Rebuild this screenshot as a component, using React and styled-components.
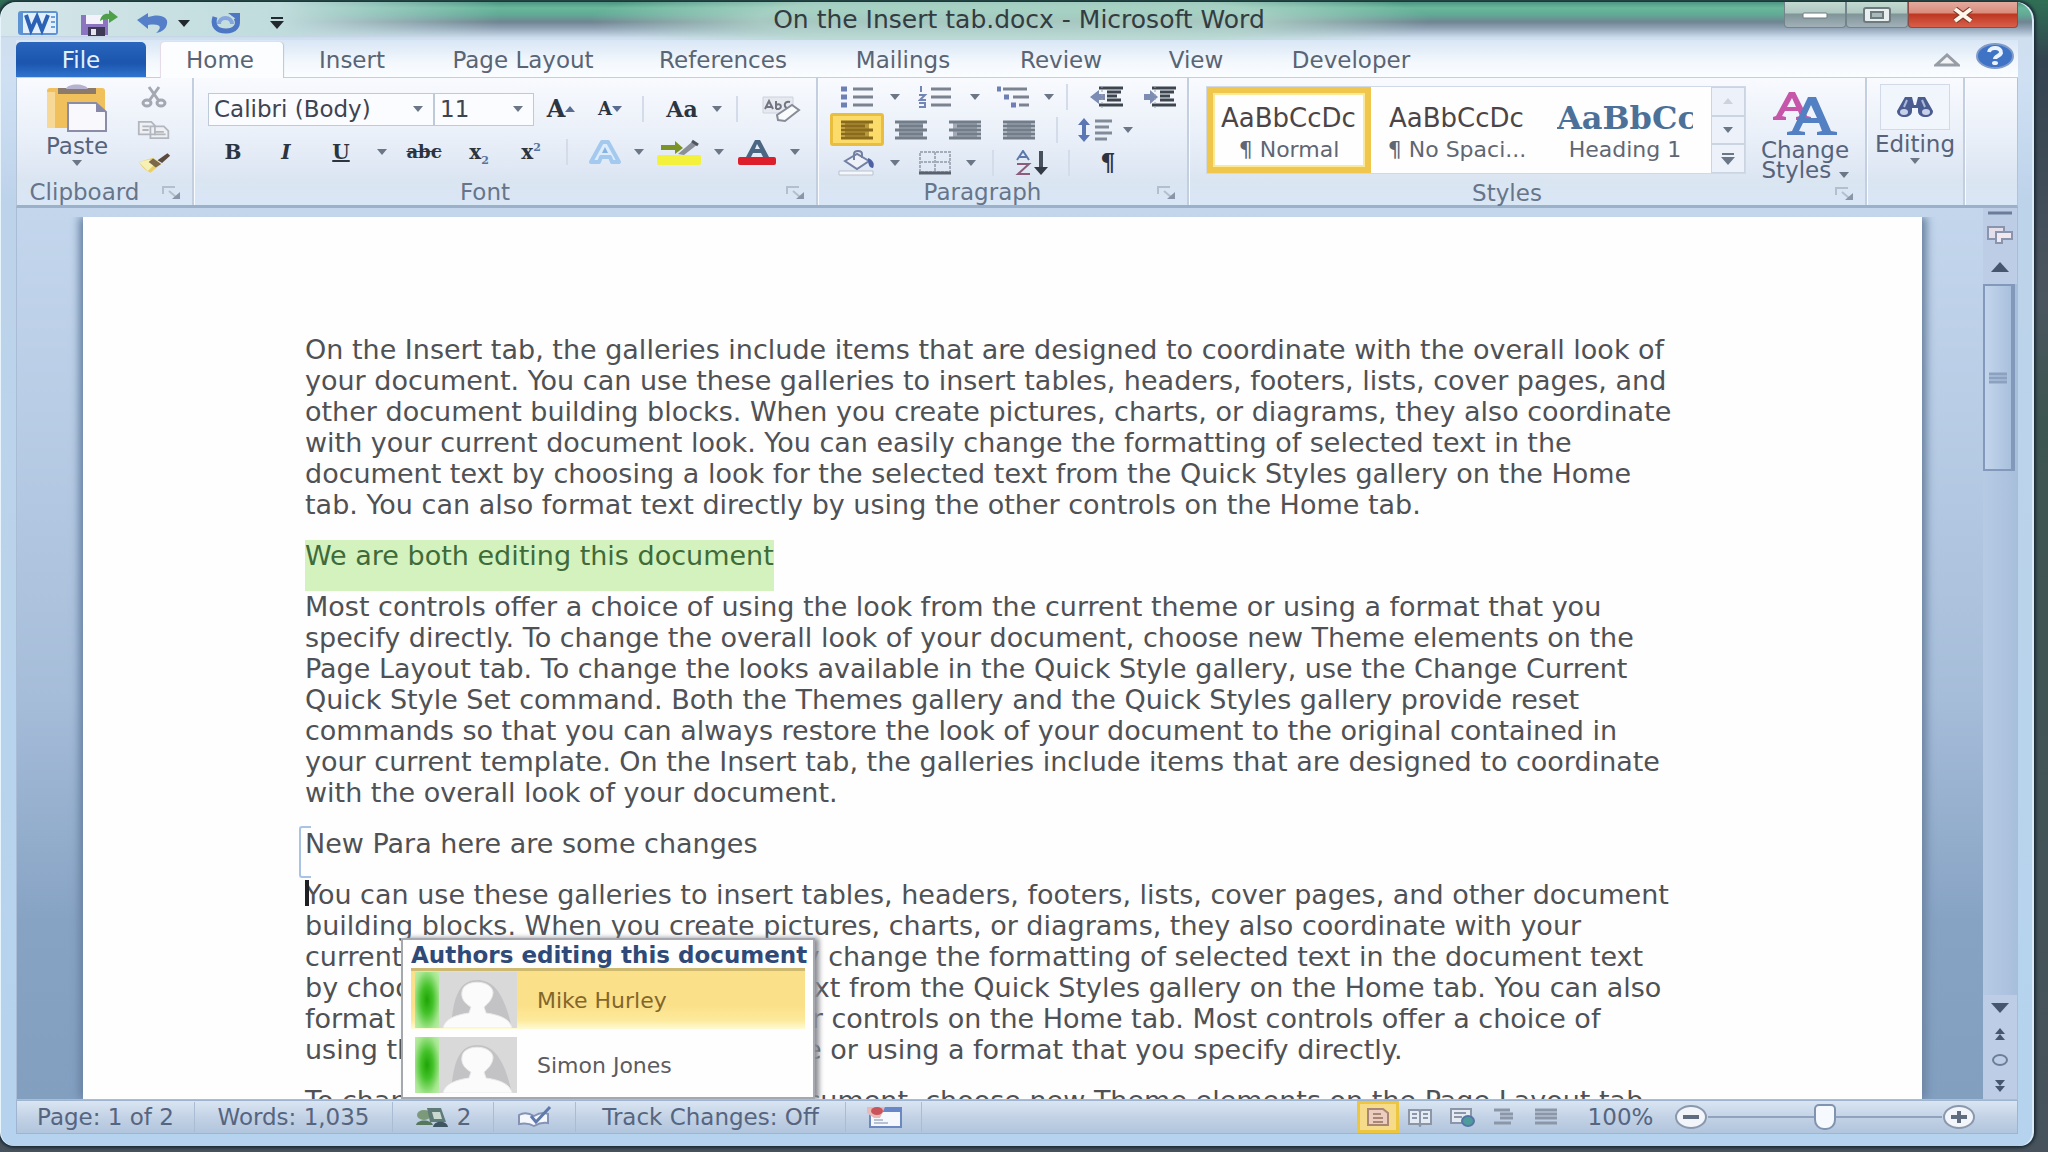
import React, { useState } from 'react'
import styled, { createGlobalStyle } from 'styled-components'

const GlobalStyle = createGlobalStyle`
  * { box-sizing: border-box; }
  body {
    margin: 0;
    background: linear-gradient(180deg, #2f6f55 0, #33434f 60px, #4b5560 300px, #3d5550 420px, #47525c 100%);
    font-family: "DejaVu Sans", sans-serif;
    font-size: 23px;
    color: #4a5361;
    overflow: hidden;
  }
  button, select, input { font: inherit; color: inherit; margin: 0; padding: 0; }
  button { border: 0; background: none; cursor: pointer; }
  p { margin: 0; }
`

/* ---------- window ---------- */

const Window = styled.div`
  height: calc(100vh - 8px);
  margin: 2px 14px 6px 0;
  padding: 0 16px 12px;
  display: flex;
  flex-direction: column;
  border-radius: 16px 18px 14px 14px;
  background:
    radial-gradient(ellipse 420px 46px at 1010px 18px, #b5d8cdcc 60%, #b5d8cd00 100%) no-repeat,
    linear-gradient(90deg, #d5e6ea 0, #c0dcdc 280px, #9fd0bf00 500px) 0 0 / 100% 34px no-repeat,
    linear-gradient(180deg, #4f9583 0, #68b79b 6px, #62a896 13px, #6f8590 20px, #8fa2b5 26px, #cfdfef 36px, #cfe0f3 76px, #bdd3ea 200px, #b5d3ee 100%);
  box-shadow: 0 0 3px 2px #1d2c38, inset 1px 0 0 #e8f4fb, inset -2px 0 0 #d8ebf6;
`
const TitleBar = styled.header`
  height: 38px;
  flex: none;
  display: flex;
  justify-content: space-between;
  align-items: center;
  position: relative;
`
const QuickAccess = styled.div`
  display: flex;
  align-items: center;
  padding-top: 4px;
`
const QuickButton = styled.button`
  width: ${({ $w }) => $w}px;
  height: 30px;
  display: flex;
  align-items: center;
  justify-content: center;
`
const Title = styled.h1`
  position: absolute;
  left: 0;
  right: 0;
  top: 4px;
  margin: 0;
  padding-left: 4px;
  text-align: center;
  font-size: 25px;
  line-height: 28px;
  font-weight: 400;
  color: #333c40;
  pointer-events: none;
  white-space: pre;
`
const WindowButtons = styled.div`
  display: flex;
  align-self: flex-start;
`
const WindowButton = styled.button`
  width: ${({ $close }) => ($close ? 110 : 62)}px;
  height: 26px;
  display: flex;
  align-items: center;
  justify-content: center;
  border: 1px solid ${({ $close }) => ($close ? '#8d4a43' : '#73858a')};
  border-top: 0;
  border-radius: 0 0 4px 4px;
  background: ${({ $close }) => $close
    ? 'linear-gradient(180deg, #e3aa9e 0, #d98b7b 11px, #bd3620 12px, #d9604a 100%)'
    : 'linear-gradient(180deg, #c3d9d2 0, #b0c8c2 11px, #7f9598 12px, #a3b0b8 100%)'};
`

/* ---------- tabs ---------- */

const TabBar = styled.nav`
  height: 38px;
  flex: none;
  display: flex;
  align-items: stretch;
  background: linear-gradient(180deg, #d8e6f5 0, #f3f8fd 60%, #fbfdff 100%);
  border-bottom: 1px solid #c2cfdd;
`
const FileTab = styled.button`
  width: 130px;
  margin: 2px 15px 0 0;
  border-radius: 5px 5px 0 0;
  color: #e4efff;
  background: linear-gradient(180deg, #2a66bd 0, #1b55ad 60%, #2f74cf 100%);
`
const Tab = styled.button`
  width: ${({ $w }) => $w}px;
  margin: 2px 0 -1px;
  padding-right: 4px;
  color: #596474;
  border-radius: 4px 4px 0 0;
  background: ${({ $active }) => ($active ? '#fcfdff' : 'transparent')};
  box-shadow: ${({ $active }) => ($active ? '1px 0 1px #b9c6d6, -1px 0 1px #e5d9e6' : 'none')};
`
const TabTools = styled.div`
  margin-left: auto;
  display: flex;
  align-items: center;
  gap: 16px;
  padding-right: 4px;
`

/* ---------- ribbon ---------- */

const Ribbon = styled.section`
  height: 130px;
  flex: none;
  display: flex;
  border: 1px solid #b3c3d6;
  border-top: 0;
  border-bottom: 3px solid #9bb1c9;
  background: linear-gradient(180deg, #f8fafe 0, #eaf0f9 45%, #dbe5f2 80%, #d9e6f5 100%);
`
const Group = styled.div`
  width: ${({ $w }) => $w}px;
  flex: none;
  display: flex;
  flex-direction: column;
  border-right: 2px solid #c3cfdf;
  box-shadow: 1px 0 0 #f8fbff;
`
const GroupBody = styled.div`
  flex: 1;
  display: flex;
  flex-direction: ${({ $column }) => ($column ? 'column' : 'row')};
  padding: ${({ $pad }) => $pad || '2px 0 0'};
`
const GroupFoot = styled.footer`
  height: 26px;
  display: flex;
  align-items: center;
  padding-right: 10px;
  color: #66758a;
`
const GroupName = styled.span`
  flex: 1;
  padding-right: 10px;
  text-align: center;
`
const Row = styled.div`
  height: ${({ $h }) => $h || 33}px;
  display: flex;
  align-items: center;
`
const Tool = styled.button`
  width: ${({ $w }) => $w}px;
  height: 33px;
  flex: none;
  display: flex;
  align-items: center;
  justify-content: center;
  border-radius: 3px;
  border: ${({ $on }) => ($on ? '3px solid #e9be3f' : '0')};
  background: ${({ $on }) => ($on ? '#fbdc6a' : 'none')};
`
const Glyph = styled.span`
  font-family: "DejaVu Serif", serif;
  font-weight: 700;
  font-size: ${({ $size }) => $size || 20}px;
  line-height: 26px;
  color: #2c3440;
  font-style: ${({ $italic }) => ($italic ? 'italic' : 'normal')};
  text-decoration: ${({ $line }) => $line || 'none'};
  sup, sub { font-size: 11px; line-height: 0; color: #5674a0; }
`
const Rule = styled.i`
  width: 2px;
  height: 26px;
  flex: none;
  margin: 0 ${({ $m }) => $m || 0}px;
  background: #d3dce8;
`
const Combo = styled.label`
  width: ${({ $w }) => $w}px;
  height: 33px;
  display: flex;
  align-items: center;
  border: 1px solid #bfcad8;
  background: #fbfcff;
  padding-right: 10px;
  select {
    flex: 1;
    min-width: 0;
    height: 30px;
    padding-left: 5px;
    border: 0;
    outline: 0;
    appearance: none;
    background: none;
    font-size: 23px;
    color: #3d4450;
  }
`
const BigTool = styled.button`
  width: ${({ $w }) => $w}px;
  display: flex;
  flex-direction: column;
  align-items: center;
  gap: 4px;
  padding-top: 4px;
  line-height: 20px;
  color: #56637a;
`
const SmallStack = styled.div`
  display: flex;
  flex-direction: column;
`
const Gallery = styled.div`
  display: flex;
  flex: none;
  width: 540px;
  height: 88px;
  border: 1px solid #d0dae6;
  background: #fefeff;
`
const StyleCard = styled.button`
  width: ${({ $w }) => $w}px;
  overflow: hidden;
  display: flex;
  flex-direction: column;
  justify-content: center;
  align-items: center;
  gap: 4px;
  padding-top: 4px;
  white-space: nowrap;
  border: ${({ $on }) => ($on ? '6px solid #f0c64c' : '0')};
  box-shadow: ${({ $on }) => ($on ? 'inset 0 0 0 2px #fbe99a' : 'none')};
`
const Sample = styled.span`
  width: 136px;
  overflow: hidden;
  text-align: left;
  font-family: ${({ $heading }) => ($heading ? '"DejaVu Serif", serif' : '"DejaVu Sans", sans-serif')};
  font-weight: ${({ $heading }) => ($heading ? 700 : 400)};
  font-size: ${({ $heading }) => ($heading ? 32 : 26)}px;
  line-height: 32px;
  color: ${({ $heading }) => ($heading ? '#4c7199' : '#4b4547')};
`
const SampleName = styled.span`
  font-size: 22px;
  line-height: 24px;
  color: #606773;
`
const GalleryScroll = styled.div`
  width: 34px;
  margin-left: auto;
  display: flex;
  flex-direction: column;
  background: #edf2fa;
  button {
    flex: 1;
    border: 1px solid #cbd5e2;
    display: flex;
    align-items: center;
    justify-content: center;
  }
`
const FindFrame = styled.span`
  width: 70px;
  height: 46px;
  display: flex;
  align-items: center;
  justify-content: center;
  border: 1px solid #d2dae8;
  background: #f1f5fc;
`

/* ---------- document ---------- */

const Workspace = styled.main`
  flex: 1;
  min-height: 0;
  display: flex;
  padding-top: 9px;
  border: 1px solid #a9bdd6;
  border-top: 0;
  background: linear-gradient(180deg, #c3d6ec 0, #b9cde6 22%, #a6bdd9 55%, #87a3c4 80%, #829fc0 100%);
`
const Page = styled.article`
  flex: 1;
  margin: 0 61px 0 66px;
  padding: 117px 200px 0 222px;
  position: relative;
  background: #fefefe;
  box-shadow: 5px 0 8px #6f87a5, -4px 0 8px #6b84a6;
  clip-path: inset(0 -16px 0 -16px);
`
const Text = styled.div`
  height: 100%;
  overflow: hidden;
  display: flex;
  flex-direction: column;
  align-items: flex-start;
  gap: 20px;
  margin: 0 -12px;
  padding: 0 12px;
  font-size: 27px;
  line-height: 31px;
  color: #4f5155;
`
const Para = styled.p`
  flex: none;
  white-space: pre;
  position: relative;
`
const Marked = styled(Para)`
  height: 51px;
  margin-bottom: -20px;
  background: #d3f2bd;
  color: #3f6b3a;
`
const Locked = styled(Para)`
  &::before {
    content: '';
    position: absolute;
    left: -6px;
    top: -2px;
    width: 10px;
    height: 48px;
    border: 2px solid #a9c3e6;
    border-right: 0;
    border-radius: 3px 0 0 3px;
  }
`
const Caret = styled.i`
  position: absolute;
  left: 0;
  top: 1px;
  width: 4px;
  height: 26px;
  background: #1f2024;
`

const Authors = styled.aside`
  position: absolute;
  left: 318px;
  bottom: 0;
  width: 414px;
  height: 161px;
  padding: 2px 8px;
  border: 2px solid #a5a8ae;
  background: #fefefe;
  box-shadow: 4px 0 5px #8b8d92;
`
const AuthorsTitle = styled.h2`
  margin: 0;
  font-size: 23px;
  line-height: 26px;
  color: #2f4a78;
  white-space: nowrap;
`
const Author = styled.button`
  width: 100%;
  height: 61px;
  margin-bottom: 4px;
  padding: 2px 4px;
  display: flex;
  align-items: center;
  gap: 20px;
  text-align: left;
  font-size: 22px;
  color: ${({ $on }) => ($on ? '#82672c' : '#5b5b60')};
  border-top: 3px solid ${({ $on }) => ($on ? '#cdb96f' : 'transparent')};
  background: ${({ $on }) => ($on ? 'linear-gradient(180deg, #fbe08a 0, #fbe08a 60%, #fdea9c 85%, #fefbd5 100%)' : 'none')};
`
const Presence = styled.span`
  width: 102px;
  height: 56px;
  display: flex;
  flex: none;
`
const Glow = styled.i`
  width: 24px;
  background: radial-gradient(ellipse at center, #1fa406 0, #44c22a 35%, #a5e68f 75%, #bfeeaa 100%);
`

/* ---------- scroll bar ---------- */

const ScrollBar = styled.div`
  width: 34px;
  margin-top: -9px;
  display: flex;
  flex-direction: column;
  background: #b3c7e1;
`
const ScrollButton = styled.button`
  height: ${({ $h }) => $h}px;
  flex: none;
  display: flex;
  align-items: center;
  justify-content: center;
  background: #bccde5;
`
const ScrollTrack = styled.div`
  flex: 1;
  background: linear-gradient(90deg, #b6cae4, #a8bfdc);
`
const Thumb = styled.div`
  width: 32px;
  height: 187px;
  display: flex;
  align-items: center;
  justify-content: center;
  border: 2px solid #8299bb;
  border-right-width: 4px;
  background: linear-gradient(90deg, #c3d5ec, #a9c0dd);
`

/* ---------- status bar ---------- */

const Status = styled.footer`
  height: 34px;
  flex: none;
  display: flex;
  align-items: center;
  border: 1px solid #9fb4cf;
  background: linear-gradient(180deg, #d9e5f2 0, #c3d2e5 50%, #b1c5dd 100%);
  color: #56657f;
`
const StatusItem = styled.button`
  width: ${({ $w }) => $w}px;
  height: 30px;
  flex: none;
  display: flex;
  align-items: center;
  justify-content: center;
  gap: 8px;
  white-space: nowrap;
  border-right: 1px solid #a9bcd4;
`
const StatusRight = styled.div`
  margin-left: auto;
  display: flex;
  align-items: center;
  padding-right: 41px;
`
const View = styled.button`
  width: 42px;
  height: 32px;
  display: flex;
  align-items: center;
  justify-content: center;
  border: ${({ $on }) => ($on ? '3px solid #ecc63e' : '0')};
  background: ${({ $on }) => ($on ? '#f6dc8a' : 'none')};
`
const ZoomValue = styled.button`
  width: 107px;
  height: 30px;
`
const ZoomButton = styled.button`
  width: 34px;
  height: 30px;
  display: flex;
`
const ZoomRange = styled.input`
  width: 234px;
  height: 30px;
  appearance: none;
  background: linear-gradient(#8fa3bf, #8fa3bf) 0 14px / 100% 2px no-repeat;
  &::-webkit-slider-thumb {
    appearance: none;
    width: 22px;
    height: 26px;
    border: 2px solid #8093b0;
    border-radius: 5px 5px 10px 10px;
    background: #f6f9fe;
  }
`

/* ---------- icons ---------- */

const Arrow = ({ color = '#6b7686', w = 10, up }) => (
  <svg width={w} height={w / 2 + 1} viewBox="0 0 10 6" preserveAspectRatio="none">
    <path d={up ? 'M0 6 5 0l5 6z' : 'M0 0h10L5 6z'} fill={color} />
  </svg>
)

const Launcher = () => (
  <button aria-label="More options">
    <svg width="20" height="14" viewBox="0 0 20 14" fill="none" stroke="#b4bfcd" strokeWidth="2">
      <path d="M1 8V1h12M7 5l7 6" />
      <path d="M18 6v7h-8z" fill="#8a96a8" stroke="none" />
    </svg>
  </button>
)

const WordLogo = () => (
  <svg width="42" height="26" viewBox="0 0 42 26">
    <rect x="1" y="1" width="40" height="24" rx="3" fill="#5d93d3" />
    <rect x="6" y="3" width="33" height="20" fill="#e3f0fc" />
    <path d="M34 7h4M34 12h4M34 17h4" stroke="#6ea0da" strokeWidth="2" />
    <path d="M9 5l5 15 6-13 5 13 6-15" fill="none" stroke="#2c62b5" strokeWidth="4" />
  </svg>
)

const SaveIcon = () => (
  <svg width="42" height="28" viewBox="0 0 42 28">
    <path d="M4 6h27v20H4z" fill="#8d74c0" />
    <path d="M9 6h17v9H9z" fill="#f4f2fb" />
    <path d="M11 18h17v9H11z" fill="#3e3a55" />
    <path d="M14 20h5v6h-5z" fill="#e6e4ef" />
    <path d="M23 12c1-6 5-8 9-7V1l9 7-9 6v-4c-3 0-6 0-9 2z" fill="#4f9f4a" />
  </svg>
)

const UndoIcon = () => (
  <svg width="34" height="22" viewBox="0 0 34 22">
    <path d="M1 8 12 1v4c12-4 21 0 19 7-1 5-5 8-11 9 6-5 6-10-8-8v4z" fill="#5580c9" />
  </svg>
)

const RedoIcon = () => (
  <svg width="30" height="22" viewBox="0 0 30 22" fill="none">
    <path d="M4 5c-3 9 2 14 11 14s14-6 10-13" stroke="#4d76c4" strokeWidth="5" />
    <path d="M8 12c0-8 13-8 13 0" stroke="#86a5dc" strokeWidth="4" />
    <path d="M17 1h12v9z" fill="#4d76c4" />
  </svg>
)

const MoreIcon = ({ color = '#22292e' }) => (
  <svg width="14" height="12" viewBox="0 0 14 12" fill={color}><path d="M1 0h12v2H1zM0 4h14l-7 8z" /></svg>
)

const MinIcon = () => (
  <svg width="26" height="8" viewBox="0 0 26 8"><rect x="1" y="2" width="24" height="5" rx="1" fill="#fff" stroke="#6d7a80" /></svg>
)

const MaxIcon = () => (
  <svg width="32" height="18" viewBox="0 0 32 18">
    <rect x="3" y="2" width="26" height="14" rx="2" fill="#e9efef" stroke="#6d7a80" strokeWidth="2" />
    <rect x="10" y="6" width="12" height="6" fill="#a9b8b8" stroke="#6d7a80" strokeWidth="2" />
  </svg>
)

const CloseIcon = () => (
  <svg width="22" height="16" viewBox="0 0 22 16">
    <path d="M3 2l16 12M19 2 3 14" stroke="#7d3a30" strokeWidth="6" />
    <path d="M3 2l16 12M19 2 3 14" stroke="#fff8ea" strokeWidth="4" />
  </svg>
)

const CollapseIcon = () => (
  <svg width="26" height="14" viewBox="0 0 26 14"><path d="M2 12 13 2l11 10z" fill="#f2f4f6" stroke="#979da6" strokeWidth="3" /></svg>
)

const HelpIcon = () => (
  <svg width="38" height="26" viewBox="0 0 38 26">
    <ellipse cx="19" cy="13" rx="18" ry="12" fill="#3f73c6" stroke="#7f9bc9" strokeWidth="2" />
    <path d="M13 9c1-6 13-5 12 1-1 3-6 3-6 6" fill="none" stroke="#eaf3ff" strokeWidth="4" />
    <ellipse cx="19" cy="20" rx="3" ry="2" fill="#eaf3ff" />
  </svg>
)

const PasteIcon = () => (
  <svg width="66" height="48" viewBox="0 0 66 48">
    <rect x="3" y="4" width="58" height="40" rx="3" fill="#efc05c" />
    <path d="M3 8h8v36H3z" fill="#f7d896" />
    <path d="M14 4h38v6H14z" fill="#8c7b6b" />
    <path d="M22 5c1-6 20-6 22 0z" fill="#b5b1cf" />
    <path d="M24 19h28l10 9v19H24z" fill="#f8f8fd" stroke="#8b8ca6" strokeWidth="2" />
    <path d="M52 19v9h10z" fill="#8889a8" />
  </svg>
)

const CutIcon = () => (
  <svg width="26" height="22" viewBox="0 0 26 22" fill="none" stroke="#a3a8b2" strokeWidth="3">
    <path d="M8 1l10 14M18 1 8 15" />
    <ellipse cx="6" cy="17" rx="4" ry="3" />
    <ellipse cx="20" cy="17" rx="4" ry="3" />
  </svg>
)

const CopyIcon = () => (
  <svg width="38" height="22" viewBox="0 0 38 22" fill="#eef0f4" stroke="#b2b6bf" strokeWidth="2">
    <path d="M2 2h14l4 4v10H2zM15 7h15l5 5v8H15z" />
    <path d="M19 13h11M19 16h13M6 7h8M6 11h7" />
  </svg>
)

const BrushIcon = () => (
  <svg width="38" height="24" viewBox="0 0 38 24">
    <path d="M2 11 18 6l9 7-12 10c-5-2-9-6-13-12z" fill="#e9cf6a" />
    <path d="M2 11 14 8l6 5-8 8z" fill="#f7f0b4" />
    <path d="M18 7l9 6-6 4-8-6z" fill="#7b6749" />
    <path d="M23 9 34 1l3 3-9 8z" fill="#5b4a3e" />
  </svg>
)

const ClearIcon = () => (
  <svg width="40" height="30" viewBox="0 0 40 30">
    <path d="M2 3h30v16H2z" fill="#e7e9f0" stroke="#cdd2dc" />
    <path d="M4 15l4-8 4 8M5 13h6M15 7v8M15 11c6-3 7 5 0 4M29 8c-7-2-7 8 0 6" fill="none" stroke="#70757f" strokeWidth="2" />
    <path d="M16 21 31 11l7 5-14 11-7-1z" fill="#fafbfd" stroke="#868c98" strokeWidth="2" />
  </svg>
)

const EffectA = () => (
  <svg width="36" height="26" viewBox="0 0 36 26">
    <path d="M4 23 15 3h6l11 20h-7l-2-5h-9l-2 5z" fill="#dcecfb" stroke="#a3c9ef" strokeWidth="4" strokeLinejoin="round" />
    <path d="M15 14h6l-3-6z" fill="#86b3e3" />
  </svg>
)

const HighlightIcon = () => (
  <svg width="46" height="30" viewBox="0 0 46 30">
    <rect x="1" y="18" width="44" height="10" rx="2" fill="#f4f13c" />
    <path d="M5 8h14V4l8 7-8 6v-4H5z" fill="#7c9427" />
    <path d="M22 17l15-13 5 3-14 11z" fill="#8a8f98" />
    <path d="M36 4l6 4" stroke="#4f5560" strokeWidth="3" />
  </svg>
)

const ColorIcon = () => (
  <svg width="40" height="28" viewBox="0 0 40 28">
    <path d="M9 19 18 2h5l9 17h-6l-2-4h-8l-2 4zm9-8h5l-3-5z" fill="#4c6784" />
    <rect x="1" y="19" width="38" height="8" rx="2" fill="#dc1f2b" />
  </svg>
)

const ListIcon = ({ kind }) => (
  <svg width="34" height="22" viewBox="0 0 34 22" stroke="#7b8391" strokeWidth="3">
    {kind === 'multi'
      ? <path d="M6 3h24M16 11h16M22 19h10" />
      : <path d="M13 3h20M13 11h20M13 19h20" />}
    {kind === 'bullet' && <path d="M1 3h6M1 11h6M1 19h6" stroke="#6c80b5" strokeWidth="5" />}
    {kind === 'number' && <path d="M3 0v6M1 9h6l-5 5h6M1 17h6v4H1" fill="none" stroke="#7385b4" strokeWidth="2" />}
    {kind === 'multi' && <path d="M0 3h4M7 11h5M14 19h5" stroke="#6c80b5" strokeWidth="5" />}
  </svg>
)

const AlignIcon = ({ kind, color = '#737c89' }) => {
  const d = {
    left: 'M1 2h32M1 6h24M1 10h32M1 14h24M1 18h32',
    center: 'M1 2h32M5 6h24M1 10h32M5 14h24M1 18h32',
    right: 'M1 2h32M9 6h24M1 10h32M9 14h24M1 18h32',
    justify: 'M1 2h32M1 6h32M1 10h32M1 14h32M1 18h32',
  }[kind]
  return (
    <svg width="34" height="20" viewBox="0 0 34 20">
      <path d="M5 2h24v16H5z" fill={color} opacity="0.6" />
      <path d={d} stroke={color} strokeWidth="3" />
    </svg>
  )
}

const IndentIcon = ({ more }) => (
  <svg width="38" height="22" viewBox="0 0 38 22">
    <path d="M12 2h24M20 6h14M20 10h10M20 14h14M12 19h24" stroke="#3d454f" strokeWidth="3" />
    <path d={more ? 'M4 8h6V4l8 7-8 7v-4H4z' : 'M18 8h-6V4l-9 7 9 7v-4h6z'} fill="#7c8cb2" />
    <path d="M15 0v22" stroke="#9aa4b5" strokeWidth="1" strokeDasharray="2 2" />
  </svg>
)

const SpacingIcon = () => (
  <svg width="36" height="26" viewBox="0 0 36 26">
    <path d="M1 8l6-7 6 7zM1 18l6 7 6-7zM5 8h4v10H5z" fill="#5b76b4" />
    <path d="M18 4h17M18 10h14M18 16h17M18 22h12" stroke="#828b99" strokeWidth="3" />
  </svg>
)

const ShadingIcon = () => (
  <svg width="40" height="26" viewBox="0 0 40 26">
    <path d="M8 11 20 4l12 7-12 8z" fill="#eef1f8" stroke="#7280a4" strokeWidth="2" />
    <path d="M17 10V4c0-4 8-4 8 0v4" fill="none" stroke="#7280a4" strokeWidth="2" />
    <path d="M31 8c5 2 7 6 5 10-4 0-5-4-5-10z" fill="#4d62a4" />
    <path d="M2 21h34v4H2z" fill="#f5f7fb" stroke="#b9c1cf" />
  </svg>
)

const BordersIcon = () => (
  <svg width="32" height="24" viewBox="0 0 32 24" fill="none" stroke="#a4adbb" strokeWidth="2">
    <path d="M1 1h30v20H1zM16 1v20M1 11h30" strokeDasharray="3 1" />
    <path d="M0 22h32" stroke="#59616e" strokeWidth="3" />
  </svg>
)

const SortIcon = () => (
  <svg width="34" height="26" viewBox="0 0 34 26" fill="none">
    <path d="M3 10 9 1l6 9M5 7h8" stroke="#5d79ab" strokeWidth="2" />
    <path d="M3 14h12L4 24h12" stroke="#8a5d7c" strokeWidth="2" />
    <path d="M27 1v18" stroke="#47505d" strokeWidth="4" />
    <path d="M20 17h14l-7 8z" fill="#323a45" />
  </svg>
)

const ChangeIcon = () => (
  <svg width="68" height="46" viewBox="0 0 68 46" fillRule="evenodd">
    <path d="M2 30v-3l3-1L18 2h6l12 24 4 1v3H25v-3l4-1-2-5H14l-3 5 4 1v3zm14-13h9l-4-9z" fill="#c656a9" />
    <path d="M16 45v-3l5-1L37 7h8l15 34 6 1v3H46v-3l5-1-3-8H32l-4 8 6 1v3zm18-17h12l-6-13z" fill="#5280c2" />
  </svg>
)

const FindIcon = () => (
  <svg width="40" height="24" viewBox="0 0 40 24">
    <path d="M10 2h7l2 8h2l2-8h7l8 14c0 8-15 8-15 0v-3h-6v3c0 8-15 8-15 0z" fill="#4b5c91" />
    <ellipse cx="9" cy="17" rx="4" ry="3" fill="#c7d1ea" />
    <ellipse cx="31" cy="17" rx="4" ry="3" fill="#c7d1ea" />
    <path d="M12 5l-3 7M27 5l3 7" stroke="#aab8dc" strokeWidth="2" />
  </svg>
)

const Avatar = () => (
  <svg width="78" height="56" viewBox="0 0 78 56">
    <rect width="78" height="56" fill="#d9d9da" />
    <path d="M12 56c2-34 10-48 26-48s26 12 34 44v4z" fill="#c3c3c5" />
    <path d="M4 56c2-9 12-13 26-15l2-6c-7-4-10-9-9-15 1-13 29-13 31 0 0 6-4 11-9 15l2 6c14 2 24 6 26 15z" fill="#fbfbfb" stroke="#e9e9e9" />
  </svg>
)

const PeopleIcon = () => (
  <svg width="34" height="22" viewBox="0 0 34 22">
    <ellipse cx="9" cy="9" rx="7" ry="5" fill="#7c9a7a" />
    <path d="M1 19c1-6 15-6 17 0z" fill="#55785c" />
    <path d="M12 2h14l5 14H15z" fill="#5f7b78" />
    <path d="M17 6h8l2 7h-8z" fill="#c9d9cf" />
    <path d="M18 21c1-7 14-7 15 0z" fill="#3d5661" />
  </svg>
)

const ProofIcon = () => (
  <svg width="36" height="24" viewBox="0 0 36 24">
    <path d="M2 10c5-3 10-2 15 1 5-3 9-4 14-2v9c-5-1-9 0-14 3-5-3-10-3-15-2z" fill="#f5f8fd" stroke="#8493b5" strokeWidth="2" />
    <path d="M14 11l5 6L33 2" fill="none" stroke="#6079ac" strokeWidth="3" />
  </svg>
)

const MacroIcon = () => (
  <svg width="38" height="24" viewBox="0 0 38 24">
    <rect x="5" y="3" width="31" height="19" fill="#f5f8fd" stroke="#6c88c0" strokeWidth="2" />
    <path d="M5 3h31v4H5z" fill="#6787c8" />
    <path d="M2 2h18l-5 11H9L2 8z" fill="#e9b9b8" />
    <ellipse cx="12" cy="6" rx="6" ry="4" fill="#c9545c" />
    <path d="M9 15h9M9 18h14" stroke="#b7c1d3" strokeWidth="2" />
  </svg>
)

const ViewIcon = ({ kind }) => (
  <svg width="26" height="20" viewBox="0 0 26 20" fill="none" stroke="#8b97a9" strokeWidth="2">
    {kind === 'print' && <path d="M3 2h15l5 4v12H3zM8 7h8M8 11h10M8 15h10" fill="#eccdc0" stroke="#a98775" />}
    {kind === 'read' && <path d="M2 3h10l1 2 1-2h10v14H14l-1 2-1-2H2zM13 5v12M5 7h5M5 11h5M16 7h5M16 11h5" fill="#e4ebf3" />}
    {kind === 'web' && (
      <>
        <path d="M2 2h20v14H2zM5 6h12M5 10h8" fill="#e4ebf3" />
        <ellipse cx="19" cy="14" rx="6" ry="5" fill="#4d9c9b" stroke="#5475a5" />
      </>
    )}
    {kind === 'outline' && <path d="M3 3h16M9 7h13M9 11h13M3 16h17" strokeWidth="3" />}
    {kind === 'draft' && <path d="M2 3h22M2 7h22M2 11h22M2 16h22" strokeWidth="3" />}
  </svg>
)

const RoundIcon = ({ plus }) => (
  <svg width="34" height="30" viewBox="0 0 34 30">
    <ellipse cx="17" cy="15" rx="15" ry="11" fill="#f2f5fa" stroke="#8a98ad" strokeWidth="2" />
    <path d={plus ? 'M9 15h16M17 9v12' : 'M9 15h16'} stroke="#606c80" strokeWidth="4" />
  </svg>
)

const RulerIcon = () => (
  <svg width="26" height="20" viewBox="0 0 26 20">
    <path d="M1 3h16v12H1z" fill="#e4dfea" stroke="#8895ad" strokeWidth="2" />
    <path d="M9 8h16v7H15v4h-6z" fill="#f1e9ef" stroke="#8895ad" strokeWidth="2" />
  </svg>
)

const SplitIcon = () => (
  <svg width="26" height="6" viewBox="0 0 26 6"><path d="M1 3h24" stroke="#6c7d99" strokeWidth="3" /></svg>
)

const GripIcon = () => (
  <svg width="18" height="12" viewBox="0 0 18 12"><path d="M0 2h18M0 6h18M0 10h18" stroke="#8ba1bf" strokeWidth="3" /></svg>
)

const JumpIcon = ({ kind }) => (
  <svg width="18" height="16" viewBox="0 0 18 16" fill="#46566f">
    {kind === 'up' && <path d="M4 8l5-6 5 6zM4 14l5-6 5 6z" />}
    {kind === 'down' && <path d="M4 2h10L9 8zM4 8h10l-5 6z" />}
    {kind === 'object' && <ellipse cx="9" cy="8" rx="7" ry="5" fill="none" stroke="#6b7d98" strokeWidth="2" />}
  </svg>
)

/* ---------- data ---------- */

const tabs = [
  ['Home', 122], ['Insert', 142], ['Page Layout', 200], ['References', 200],
  ['Mailings', 160], ['Review', 156], ['View', 114], ['Developer', 196],
]

const paragraphs = [
  { text: `On the Insert tab, the galleries include items that are designed to coordinate with the overall look of
your document. You can use these galleries to insert tables, headers, footers, lists, cover pages, and
other document building blocks. When you create pictures, charts, or diagrams, they also coordinate
with your current document look. You can easily change the formatting of selected text in the
document text by choosing a look for the selected text from the Quick Styles gallery on the Home
tab. You can also format text directly by using the other controls on the Home tab.` },
  { as: Marked, text: 'We are both editing this document' },
  { text: `Most controls offer a choice of using the look from the current theme or using a format that you
specify directly. To change the overall look of your document, choose new Theme elements on the
Page Layout tab. To change the looks available in the Quick Style gallery, use the Change Current
Quick Style Set command. Both the Themes gallery and the Quick Styles gallery provide reset
commands so that you can always restore the look of your document to the original contained in
your current template. On the Insert tab, the galleries include items that are designed to coordinate
with the overall look of your document.` },
  { as: Locked, text: 'New Para here are some changes' },
  { caret: true, text: `You can use these galleries to insert tables, headers, footers, lists, cover pages, and other document
building blocks. When you create pictures, charts, or diagrams, they also coordinate with your
current document look. You can easily change the formatting of selected text in the document text
by choosing a look for the selected text from the Quick Styles gallery on the Home tab. You can also
format text directly by using the other controls on the Home tab. Most controls offer a choice of
using the look from the current theme or using a format that you specify directly.` },
  { text: 'To change the overall look of your document, choose new Theme elements on the Page Layout tab.' },
]

const cards = [
  { name: '¶ Normal', sample: 'AaBbCcDc', w: 164 },
  { name: '¶ No Spaci...', sample: 'AaBbCcDc', w: 172 },
  { name: 'Heading 1', sample: 'AaBbCc', w: 164, heading: true },
]

const Drop = ({ w = 30, label }) => (
  <Tool $w={w} aria-label={label}><Arrow /></Tool>
)

/* ---------- sections ---------- */

const ClipboardGroup = () => (
  <Group $w={177}>
    <GroupBody>
      <BigTool $w={120}>
        <PasteIcon />
        <span>Paste</span>
        <Arrow />
      </BigTool>
      <SmallStack>
        <Tool $w={34} aria-label="Cut"><CutIcon /></Tool>
        <Tool $w={34} aria-label="Copy"><CopyIcon /></Tool>
        <Tool $w={34} aria-label="Format Painter"><BrushIcon /></Tool>
      </SmallStack>
    </GroupBody>
    <GroupFoot><GroupName>Clipboard</GroupName><Launcher /></GroupFoot>
  </Group>
)

const FontGroup = () => (
  <Group $w={624}>
    <GroupBody $column $pad="13px 0 0 14px">
      <Row $h={36}>
        <Combo $w={226}>
          <select aria-label="Font"><option>Calibri (Body)</option></select>
          <Arrow />
        </Combo>
        <Combo $w={100}>
          <select aria-label="Font size"><option>11</option></select>
          <Arrow />
        </Combo>
        <Tool $w={54} aria-label="Grow Font"><Glyph $size={24}>A</Glyph><Arrow up color="#5a6d91" /></Tool>
        <Tool $w={44} aria-label="Shrink Font"><Glyph $size={18}>A</Glyph><Arrow color="#5a6d91" /></Tool>
        <Rule $m={10} />
        <Tool $w={56} aria-label="Change Case"><Glyph $size={22}>Aa</Glyph></Tool>
        <Drop w={14} label="Case list" />
        <Rule $m={12} />
        <Tool $w={62} aria-label="Clear Formatting"><ClearIcon /></Tool>
      </Row>
      <Row $h={50}>
        <Tool $w={50} aria-label="Bold"><Glyph>B</Glyph></Tool>
        <Tool $w={56} aria-label="Italic"><Glyph $italic>I</Glyph></Tool>
        <Tool $w={54} aria-label="Underline"><Glyph $line="underline">U</Glyph></Tool>
        <Drop w={28} label="Underline list" />
        <Tool $w={56} aria-label="Strikethrough"><Glyph $size={18} $line="line-through">abc</Glyph></Tool>
        <Tool $w={54} aria-label="Subscript"><Glyph>x<sub>2</sub></Glyph></Tool>
        <Tool $w={50} aria-label="Superscript"><Glyph>x<sup>2</sup></Glyph></Tool>
        <Rule $m={10} />
        <Tool $w={54} aria-label="Text Effects"><EffectA /></Tool>
        <Drop w={14} label="Effects list" />
        <Tool $w={66} aria-label="Highlight"><HighlightIcon /></Tool>
        <Drop w={14} label="Highlight list" />
        <Tool $w={62} aria-label="Font Color"><ColorIcon /></Tool>
        <Drop w={14} label="Color list" />
      </Row>
    </GroupBody>
    <GroupFoot><GroupName>Font</GroupName><Launcher /></GroupFoot>
  </Group>
)

const ParagraphGroup = () => {
  const [align, setAlign] = useState('left')
  return (
    <Group $w={371}>
      <GroupBody $column $pad="2px 0 0 12px">
        <Row>
          <Tool $w={54} aria-label="Bullets"><ListIcon kind="bullet" /></Tool>
          <Drop w={22} label="Bullet list" />
          <Tool $w={58} aria-label="Numbering"><ListIcon kind="number" /></Tool>
          <Drop w={22} label="Number list" />
          <Tool $w={56} aria-label="Multilevel List"><ListIcon kind="multi" /></Tool>
          <Drop w={14} label="Multilevel list" />
          <Rule $m={10} />
          <Tool $w={56} aria-label="Decrease Indent"><IndentIcon /></Tool>
          <Tool $w={50} aria-label="Increase Indent"><IndentIcon more /></Tool>
        </Row>
        <Row>
          {['left', 'center', 'right', 'justify'].map((kind) => (
            <Tool key={kind} $w={54} $on={align === kind} aria-label={`Align ${kind}`} onClick={() => setAlign(kind)}>
              <AlignIcon kind={kind} color={align === kind ? '#8a6a1c' : undefined} />
            </Tool>
          ))}
          <Rule $m={10} />
          <Tool $w={54} aria-label="Line Spacing"><SpacingIcon /></Tool>
          <Drop w={12} label="Spacing list" />
        </Row>
        <Row>
          <Tool $w={54} aria-label="Shading"><ShadingIcon /></Tool>
          <Drop w={22} label="Shading list" />
          <Tool $w={58} aria-label="Borders"><BordersIcon /></Tool>
          <Drop w={14} label="Borders list" />
          <Rule $m={14} />
          <Tool $w={46} aria-label="Sort"><SortIcon /></Tool>
          <Rule $m={14} />
          <Tool $w={48} aria-label="Show marks"><Glyph $size={24}>¶</Glyph></Tool>
        </Row>
      </GroupBody>
      <GroupFoot><GroupName>Paragraph</GroupName><Launcher /></GroupFoot>
    </Group>
  )
}

const StylesGroup = () => (
  <Group $w={678}>
    <GroupBody $pad="8px 0 0 17px">
      <Gallery>
        {cards.map((c, i) => (
          <StyleCard key={c.name} $w={c.w} $on={i === 0}>
            <Sample $heading={c.heading}>{c.sample}</Sample>
            <SampleName>{c.name}</SampleName>
          </StyleCard>
        ))}
        <GalleryScroll>
          <button aria-label="Row up"><Arrow up color="#ccd3de" /></button>
          <button aria-label="Row down"><Arrow /></button>
          <button aria-label="More styles"><MoreIcon color="#6b7686" /></button>
        </GalleryScroll>
      </Gallery>
      <BigTool $w={118}>
        <ChangeIcon />
        <span>Change<br />Styles <Arrow /></span>
      </BigTool>
    </GroupBody>
    <GroupFoot><GroupName>Styles</GroupName><Launcher /></GroupFoot>
  </Group>
)

const AuthorsPopup = () => (
  <Authors>
    <AuthorsTitle>Authors editing this document</AuthorsTitle>
    {['Mike Hurley', 'Simon Jones'].map((name, i) => (
      <Author key={name} $on={i === 0}>
        <Presence><Glow /><Avatar /></Presence>
        {name}
      </Author>
    ))}
  </Authors>
)

const StatusBar = () => {
  const [view, setView] = useState('print')
  const [zoom, setZoom] = useState(100)
  return (
    <Status>
      <StatusItem $w={178}>Page: 1 of 2</StatusItem>
      <StatusItem $w={198}>Words: 1,035</StatusItem>
      <StatusItem $w={101}><PeopleIcon />2</StatusItem>
      <StatusItem $w={82} aria-label="Proofing"><ProofIcon /></StatusItem>
      <StatusItem $w={270}>Track Changes: Off</StatusItem>
      <StatusItem $w={76} aria-label="Record macro"><MacroIcon /></StatusItem>
      <StatusRight>
        {['print', 'read', 'web', 'outline', 'draft'].map((kind) => (
          <View key={kind} $on={view === kind} aria-label={`${kind} view`} onClick={() => setView(kind)}>
            <ViewIcon kind={kind} />
          </View>
        ))}
        <ZoomValue>{zoom}%</ZoomValue>
        <ZoomButton aria-label="Zoom out" onClick={() => setZoom(zoom - 10)}><RoundIcon /></ZoomButton>
        <ZoomRange type="range" min="10" max="190" value={zoom} aria-label="Zoom" onChange={(e) => setZoom(Number(e.target.value))} />
        <ZoomButton aria-label="Zoom in" onClick={() => setZoom(zoom + 10)}><RoundIcon plus /></ZoomButton>
      </StatusRight>
    </Status>
  )
}

const App = () => {
  const [tab, setTab] = useState('Home')

  return (
    <>
      <GlobalStyle />
      <Window>
        <TitleBar>
          <QuickAccess>
            <QuickButton $w={44} aria-label="Word"><WordLogo /></QuickButton>
            <QuickButton $w={76} aria-label="Save"><SaveIcon /></QuickButton>
            <QuickButton $w={34} aria-label="Undo"><UndoIcon /></QuickButton>
            <QuickButton $w={28} aria-label="Undo list"><Arrow w={12} color="#22292e" /></QuickButton>
            <QuickButton $w={56} aria-label="Redo"><RedoIcon /></QuickButton>
            <QuickButton $w={46} aria-label="Customize"><MoreIcon /></QuickButton>
          </QuickAccess>
          <Title>On the Insert tab.docx - Microsoft Word</Title>
          <WindowButtons>
            <WindowButton aria-label="Minimize"><MinIcon /></WindowButton>
            <WindowButton aria-label="Restore"><MaxIcon /></WindowButton>
            <WindowButton $close aria-label="Close"><CloseIcon /></WindowButton>
          </WindowButtons>
        </TitleBar>

        <TabBar>
          <FileTab>File</FileTab>
          {tabs.map(([name, w]) => (
            <Tab key={name} $w={w} $active={tab === name} onClick={() => setTab(name)}>{name}</Tab>
          ))}
          <TabTools>
            <button aria-label="Minimize ribbon"><CollapseIcon /></button>
            <button aria-label="Help"><HelpIcon /></button>
          </TabTools>
        </TabBar>

        <Ribbon>
          <ClipboardGroup />
          <FontGroup />
          <ParagraphGroup />
          <StylesGroup />
          <Group $w={98}>
            <GroupBody>
              <BigTool $w={96}>
                <FindFrame><FindIcon /></FindFrame>
                <span>Editing</span>
                <Arrow />
              </BigTool>
            </GroupBody>
          </Group>
        </Ribbon>

        <Workspace>
          <Page>
            <Text>
              {paragraphs.map(({ as: Kind = Para, text, caret }) => (
                <Kind key={text}>{caret && <Caret />}{text}</Kind>
              ))}
            </Text>
            <AuthorsPopup />
          </Page>
          <ScrollBar>
            <ScrollButton $h={10} aria-label="Split"><SplitIcon /></ScrollButton>
            <ScrollButton $h={32} aria-label="Ruler"><RulerIcon /></ScrollButton>
            <ScrollButton $h={34} aria-label="Scroll up"><Arrow up w={18} color="#46566f" /></ScrollButton>
            <ScrollTrack>
              <Thumb><GripIcon /></Thumb>
            </ScrollTrack>
            <ScrollButton $h={26} aria-label="Scroll down"><Arrow w={18} color="#46566f" /></ScrollButton>
            <ScrollButton $h={26} aria-label="Previous page"><JumpIcon kind="up" /></ScrollButton>
            <ScrollButton $h={26} aria-label="Select object"><JumpIcon kind="object" /></ScrollButton>
            <ScrollButton $h={26} aria-label="Next page"><JumpIcon kind="down" /></ScrollButton>
          </ScrollBar>
        </Workspace>

        <StatusBar />
      </Window>
    </>
  )
}

export default App
